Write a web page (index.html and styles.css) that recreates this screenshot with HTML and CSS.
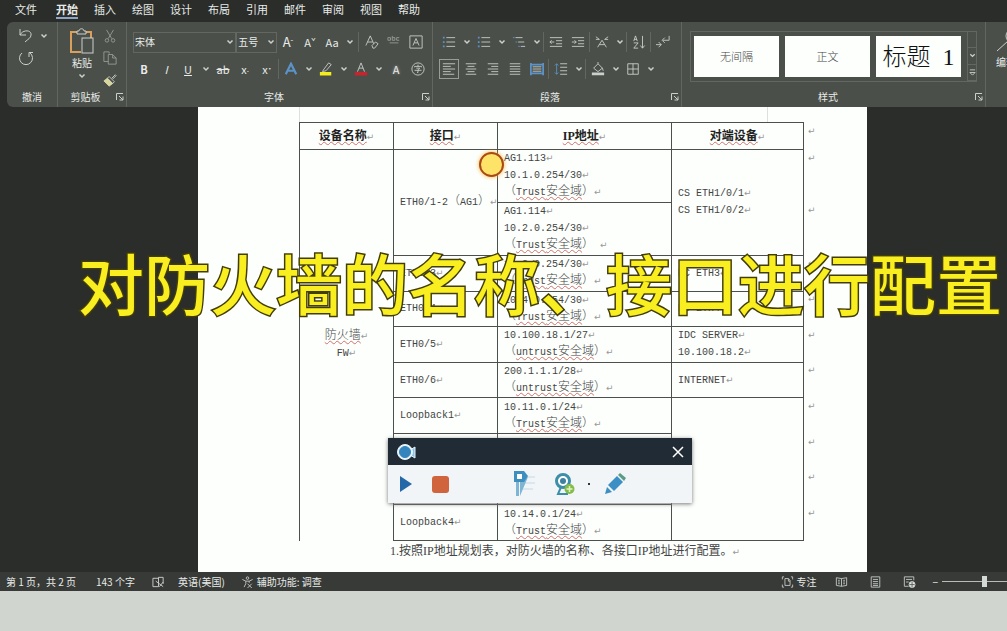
FILE: index.html
```html
<!DOCTYPE html>
<html lang="zh-CN">
<head>
<meta charset="utf-8">
<title>IP地址规划表</title>
<link rel="stylesheet" href="styles.css">
</head>
<body>
<svg class="defs" aria-hidden="true">
  <symbol id="chev" viewBox="0 0 8 8"><path d="M1.500 2.500 4 5l2.500-2.500" stroke-width="1.500"/></symbol>
  <symbol id="launch" viewBox="0 0 8 8"><path d="M.5 7V.5H7M3 3l4 4M7 3.500V7H3.500"/></symbol>
  <symbol id="list" viewBox="0 0 16 16"><path d="M5 3h10M5 8h10M5 13h10"/><path class="blue" d="M1 3h2M1 8h2M1 13h2" stroke-width="2"/></symbol>
</svg>

<nav class="menu">
  <a class="first" href="#">文件</a><a class="active" href="#">开始</a><a href="#">插入</a><a href="#">绘图</a><a href="#">设计</a><a href="#">布局</a><a href="#">引用</a><a href="#">邮件</a><a href="#">审阅</a><a href="#">视图</a><a href="#">帮助</a>
</nav>

<header class="ribbon">
  <section class="group undo">
    <div class="tools">
      <div class="row">
        <button class="ic" aria-label="撤消"><svg viewBox="0 0 16 16"><path d="M2 1v6h6M2 7c3-6 12-5 11 0 0 3-3 4-6 7"/></svg></button>
        <button class="ch" aria-label="撤消选项"><svg><use href="#chev"/></svg></button>
      </div>
      <div class="row"><button class="ic" aria-label="重复"><svg viewBox="0 0 16 16"><path d="M4 3a6.500 6.500 0 1 0 8 0M11 7V2.500h4"/></svg></button></div>
    </div>
    <div class="label"><span>撤消</span></div>
  </section>

  <section class="group clip">
    <div class="tools cliptools">
      <button class="paste">
        <svg viewBox="0 0 26 28"><path class="orange" d="M8 4H2v20h10M17 4h5v6" stroke-width="2"/><path d="M8 6V3h2c0-3 5-3 5 0h2v3z"/><rect x="13" y="10" width="11" height="15"/></svg>
        <span>粘贴</span>
        <svg class="chv"><use href="#chev"/></svg>
      </button>
      <div class="side">
        <button class="dim" aria-label="剪切"><svg viewBox="0 0 16 16"><path d="m4 1 6 10M12 1 6 11"/><circle cx="4.500" cy="13" r="2"/><circle cx="11.500" cy="13" r="2"/></svg></button>
        <button class="dim" aria-label="复制"><svg viewBox="0 0 16 16"><path d="M6 12H1V1h6v2M6 4h5l4 4v7H6zM11 4v4h4"/></svg></button>
        <button aria-label="格式刷"><svg viewBox="0 0 16 16"><path d="m10 6 4-4 1 1-4 4M7 4l6 6-2 2-6-6z"/><path class="cream" d="m5 6 6 6-4 3-6-6z"/></svg></button>
      </div>
    </div>
    <div class="label"><span>剪贴板</span><button class="launch" aria-label="剪贴板选项"><svg><use href="#launch"/></svg></button></div>
  </section>

  <section class="group font">
    <div class="tools">
      <div class="row">
        <button class="combo family" aria-label="字体">宋体<svg><use href="#chev"/></svg></button>
        <button class="combo size" aria-label="字号">五号<svg><use href="#chev"/></svg></button>
        <button class="ic big">A<sup>ˆ</sup></button>
        <button class="ic">A<sup>ˇ</sup></button>
        <button class="ic">Aa</button><button class="ch"><svg><use href="#chev"/></svg></button>
        <i class="sep wide"></i>
        <button class="ic" aria-label="清除格式"><svg viewBox="0 0 16 16"><path d="m1 12 5-11 4 9M3 8h6M8 12l4-4 3 2-4 5H9z"/></svg></button>
        <button class="ic dim" aria-label="拼音指南"><svg viewBox="0 0 16 16"><path d="M1 3h3v3H1zM6 1v5h3V3H6M14 3h-3v3h3M3 9h10"/></svg></button>
        <button class="ic" aria-label="字符边框"><svg viewBox="0 0 16 16"><path d="M1 1h14v14H1zM4.500 12 8 4l3.500 8M6 9h4"/></svg></button>
      </div>
      <div class="row">
        <button class="ic"><b>B</b></button>
        <button class="ic"><em>I</em></button>
        <button class="ic"><u>U</u></button><button class="ch"><svg><use href="#chev"/></svg></button>
        <button class="ic"><s>ab</s></button>
        <button class="ic">x<sub>.</sub></button>
        <button class="ic">x<sup>˙</sup></button>
        <i class="sep"></i>
        <button class="ic" aria-label="文本效果"><svg viewBox="0 0 16 16"><path class="blue" d="m2 14 6-12 6 12M5 10h6" stroke-width="2.500"/></svg></button><button class="ch"><svg><use href="#chev"/></svg></button>
        <button class="ic" aria-label="突出显示"><svg viewBox="0 0 16 16"><path d="m5 9 6-8 3 2-6 7-4 1z"/><path class="yellow" d="M1 13.500h13" stroke-width="4"/></svg></button><button class="ch"><svg><use href="#chev"/></svg></button>
        <button class="ic" aria-label="字体颜色"><svg viewBox="0 0 16 16"><path class="red" d="M1 13.500h14" stroke-width="4"/><path d="m4 11 4-10 4 10M5.500 7h5"/></svg></button><button class="ch"><svg><use href="#chev"/></svg></button>
        <button class="ic shade">A</button>
        <button class="ic" aria-label="带圈字符"><svg viewBox="0 0 16 16"><circle cx="8" cy="8" r="7"/><path d="M4 6V5h8v1M8 3v2M6 7h4L8 9v3H7M4 9.500h8"/></svg></button>
      </div>
    </div>
    <div class="label"><span>字体</span><button class="launch" aria-label="字体选项"><svg><use href="#launch"/></svg></button></div>
  </section>

  <section class="group para">
    <div class="tools">
      <div class="row">
        <button class="ic" aria-label="项目符号"><svg><use href="#list"/></svg></button><button class="ch"><svg><use href="#chev"/></svg></button>
        <button class="ic" aria-label="编号"><svg><use href="#list"/></svg></button><button class="ch"><svg><use href="#chev"/></svg></button>
        <button class="ic" aria-label="多级列表"><svg viewBox="0 0 16 16"><path d="M4 3h8M7 8h7M10 13h5"/><path class="blue" d="M1 3h2M4 8h2M7 13h2"/></svg></button><button class="ch"><svg><use href="#chev"/></svg></button>
        <i class="sep"></i>
        <button class="ic" aria-label="减少缩进"><svg viewBox="0 0 16 16"><path d="M1 3h14M8 6.500h7M8 10h7M1 13h14M6 8H1m2-2L1 8l2 2"/></svg></button>
        <button class="ic" aria-label="增加缩进"><svg viewBox="0 0 16 16"><path d="M1 3h14M8 6.500h7M8 10h7M1 13h14M1 8h5M4 6l2 2-2 2"/></svg></button>
        <i class="sep"></i>
        <button class="ic" aria-label="中文版式"><svg viewBox="0 0 16 16"><path d="m3 14 5-8 5 8M5 11h6M1 2l4 3M15 2l-4 3M1 5h4M11 5h4"/></svg></button><button class="ch"><svg><use href="#chev"/></svg></button>
        <i class="sep"></i>
        <button class="ic" aria-label="排序"><svg viewBox="0 0 16 16"><path d="m2 7 2-6 2 6M2.500 5h3M2 9h5l-5 6h5M12 1v14M9.500 12l2.500 3 2.500-3"/></svg></button>
        <i class="sep"></i>
        <button class="ic" aria-label="显示编辑标记"><svg viewBox="0 0 16 16"><path d="M15 1v5H8M10 3 7 6l3 3M0 11h6M3 8l3 3-3 3"/></svg></button>
      </div>
      <div class="row">
        <button class="ic on" aria-label="左对齐"><svg viewBox="0 0 16 16"><path d="M1 2h14M1 5h9M1 8h14M1 11h9M1 14h13"/></svg></button>
        <button class="ic" aria-label="居中"><svg viewBox="0 0 16 16"><path d="M2 2h12M4 5h8M2 8h12M4 11h8M2 14h12"/></svg></button>
        <button class="ic" aria-label="右对齐"><svg viewBox="0 0 16 16"><path d="M2 2h12M6 5h8M2 8h12M6 11h8M2 14h12"/></svg></button>
        <button class="ic" aria-label="两端对齐"><svg viewBox="0 0 16 16"><path d="M2 2h12M2 5h12M2 8h12M2 11h12M2 14h12"/></svg></button>
        <button class="ic" aria-label="分散对齐"><svg viewBox="0 0 16 16"><path class="blue" d="M1 1v14M15 1v14M1 3h14M1 13h14" stroke-width="2"/><path d="M3 5.500h10M3 8h10M3 10.500h10"/></svg></button>
        <i class="sep"></i>
        <button class="ic" aria-label="行距"><svg viewBox="0 0 16 16"><path d="M7 2h8M7 6h8M7 10h8M7 14h8"/><path class="blue" d="M3 2v12M1 4l2-2 2 2M1 12l2 2 2-2"/></svg></button><button class="ch"><svg><use href="#chev"/></svg></button>
        <i class="sep"></i>
        <button class="ic" aria-label="底纹"><svg viewBox="0 0 16 16"><path d="m3 7 5-5 5 5-5 4zM8 2V0M13 7l1 3"/><path d="M1 13.500h14" stroke-width="3"/></svg></button><button class="ch"><svg><use href="#chev"/></svg></button>
        <button class="ic" aria-label="边框"><svg viewBox="0 0 16 16"><path d="M2 2h12v12H2zM8 2v12M2 8h12"/></svg></button><button class="ch"><svg><use href="#chev"/></svg></button>
      </div>
    </div>
    <div class="label"><span>段落</span><button class="launch" aria-label="段落选项"><svg><use href="#launch"/></svg></button></div>
  </section>

  <section class="group styles">
    <div class="gallery">
      <button class="card">无间隔</button>
      <button class="card">正文</button>
      <button class="card heading">标题&nbsp; 1</button>
      <div class="scroll">
        <button aria-label="上一行"></button>
        <button aria-label="下一行"><svg><use href="#chev"/></svg></button>
        <button aria-label="其他样式"><svg viewBox="0 0 8 8"><path d="M1 1h6M1 4h6L4 7z"/></svg></button>
      </div>
    </div>
    <div class="label"><span>样式</span><button class="launch" aria-label="样式选项"><svg><use href="#launch"/></svg></button></div>
  </section>

  <section class="group edit">
    <button class="find"><svg viewBox="0 0 28 28"><circle cx="17" cy="9" r="7"/><path d="M12 14 1 24"/></svg><span>编辑</span></button>
  </section>
</header>

<main class="work">
  <article class="page">
    <div class="crop"></div>
    <table>
      <colgroup><col class="c1"><col class="c2"><col class="c3"><col class="c4"><col class="c5"></colgroup>
      <tr class="head"><th><u>设备名称</u><i>↵</i></th><th><u>接口</u><i>↵</i></th><th><u>IP地址</u><i>↵</i></th><th><u>对端设备</u><i>↵</i></th><td class="end"><i>↵</i></td></tr>
      <tr><td class="dev" rowspan="10"><u class="zh">防火墙</u><i>↵</i><br>FW<i>↵</i></td><td rowspan="2">ETH0/1-2<span class="zh">（</span>AG1<span class="zh">）</span><i>↵</i></td><td>AG1.113<i>↵</i><br>10.1.0.254/30<i>↵</i><br><span class="zh">（</span><u>Trust<span class="zh">安全域</span></u><span class="zh">）</span><i>↵</i></td><td rowspan="2">CS ETH1/0/1<i>↵</i><br>CS ETH1/0/2<i>↵</i></td><td class="end"><i>↵</i></td></tr>
      <tr><td>AG1.114<i>↵</i><br>10.2.0.254/30<i>↵</i><br><span class="zh">（</span><u>Trust<span class="zh">安全域</span></u><span class="zh">）</span> <i>↵</i></td><td class="end"><i>↵</i></td></tr>
      <tr><td>ETH0/3<i>↵</i></td><td>10.3.0.254/30<i>↵</i><br><span class="zh">（</span><u>Trust<span class="zh">安全域</span></u><span class="zh">）</span><i>↵</i></td><td>BC ETH3<i>↵</i></td><td class="end"><i>↵</i></td></tr>
      <tr><td>ETH0/4<i>↵</i></td><td>10.4.0.254/30<i>↵</i><br><span class="zh">（</span><u>Trust<span class="zh">安全域</span></u><span class="zh">）</span><i>↵</i></td><td>BC ETH4<i>↵</i></td><td class="end"><i>↵</i></td></tr>
      <tr><td>ETH0/5<i>↵</i></td><td>10.100.18.1/27<i>↵</i><br><span class="zh">（</span><u>untrust<span class="zh">安全域</span></u><span class="zh">）</span><i>↵</i></td><td>IDC SERVER<i>↵</i><br>10.100.18.2<i>↵</i></td><td class="end"><i>↵</i></td></tr>
      <tr><td>ETH0/6<i>↵</i></td><td>200.1.1.1/28<i>↵</i><br><span class="zh">（</span><u>untrust<span class="zh">安全域</span></u><span class="zh">）</span><i>↵</i></td><td>INTERNET<i>↵</i></td><td class="end"><i>↵</i></td></tr>
      <tr><td>Loopback1<i>↵</i></td><td>10.11.0.1/24<i>↵</i><br><span class="zh">（</span><u>Trust<span class="zh">安全域</span></u><span class="zh">）</span><i>↵</i></td><td rowspan="4"></td><td class="end"><i>↵</i></td></tr>
      <tr><td></td><td><br><br></td><td class="end"><i>↵</i></td></tr>
      <tr><td></td><td><br><br></td><td class="end"><i>↵</i></td></tr>
      <tr><td>Loopback4<i>↵</i></td><td>10.14.0.1/24<i>↵</i><br><span class="zh">（</span><u>Trust<span class="zh">安全域</span></u><span class="zh">）</span><i>↵</i></td><td class="end"><i>↵</i></td></tr>
    </table>
    <p class="note"><span class="num">1.</span>按照<span class="num">IP</span>地址规划表，对防火墙的名称、各接口<span class="num">IP</span>地址进行配置。<i>↵</i></p>
  </article>
</main>

<footer class="status">
  <span class="pages">第 1 页，共 2 页</span>
  <span class="words">143 个字</span>
  <svg class="proof" viewBox="0 0 14 12"><path d="M7 2H1v9h6V1h5v7M4 5l8 6M8 11l4-5"/></svg>
  <span class="lang">英语(美国)</span>
  <svg class="access" viewBox="0 0 14 14"><circle cx="7" cy="2.500" r="1.500"/><path d="M1 4l4 2v3l-2 4M13 4 9 6v2M5 6h4M7 9l5 5M12 9l-5 5"/></svg>
  <span>辅助功能: 调查</span>
  <span class="spacer"></span>
  <svg class="focus" viewBox="0 0 14 14"><path d="M3 1H1v3M11 1h2v3M1 10v3h2M13 10v3h-2M4 3h4l2 2v6H4zM8 3v3h2"/></svg>
  <span class="focustext">专注</span>
  <svg class="view" viewBox="0 0 14 14"><path d="M7 3 1 2v9l6 1 6-1V2zM7 3v9M3 5h2M3 7h2M3 9h2M9 5h2M9 7h2M9 9h2"/></svg>
  <svg class="view" viewBox="0 0 14 14"><path d="M2 1h10v12H2zM4 4h6M4 6.500h6M4 9h6M4 11h6"/></svg>
  <svg class="view last" viewBox="0 0 14 14"><path d="M6 12H1V1h11v4M3 4h7M3 7h3"/><circle class="fill" cx="10" cy="10" r="3.500"/><path class="dark" d="M10 7v6M7 10h6"/></svg>
  <span class="minus">−</span>
  <input class="zoom" type="range" min="0" max="100" value="50" aria-label="显示比例">
</footer>
<div class="desk"></div>

<div class="pointer"></div>
<p class="caption">对防火墙的名称、接口进行配置</p>

<aside class="recorder">
  <div class="bar">
    <svg class="cam" viewBox="0 0 20 18"><path class="camtail" d="m14 7 5-3v11l-5-3z"/><circle class="camring" cx="9" cy="9" r="7.500"/><circle class="camlens" cx="9" cy="9" r="5.500"/></svg>
    <button class="close" aria-label="关闭"><svg viewBox="0 0 12 12"><path d="m1 1 10 10M11 1 1 11" stroke-width="1.500"/></svg></button>
  </div>
  <div class="controls">
    <button class="play" aria-label="播放"><svg viewBox="0 0 14 16"><path d="M1 0v16L13 8z"/></svg></button>
    <button class="stop" aria-label="停止"></button>
    <button class="mark" aria-label="标记"><svg viewBox="0 0 24 28"><path fill="#dbe6ee" d="M10 6h13v2H10zM10 12h13v2H10zM10 18h11v2H10z"/><path fill="#7fb5d4" d="M4 11v15h3V11zM8 12v14l8-19z"/><path fill="#3d8fc0" d="M2 1h10l4 5-4 6H2z"/><rect x="5" y="4" width="5" height="5" fill="#fff"/></svg></button>
    <button class="web" aria-label="添加摄像头"><svg viewBox="0 0 22 24"><path d="m7 15-3 7h10" fill="none" stroke="#3d8fa8" stroke-width="2"/><circle cx="9" cy="9" r="6.500" fill="#fff" stroke="#3d8fa8" stroke-width="3"/><circle cx="9" cy="9" r="3" fill="#3d80a0"/><circle cx="15.500" cy="17" r="5" fill="#84bc4c"/><path d="M12.500 17h6M15.500 14v6" stroke="#e4f3bd" stroke-width="1.500"/></svg></button>
    <span class="dot"></span>
    <button class="pen" aria-label="画笔"><svg viewBox="0 0 22 22"><path fill="#3b8fc4" d="m4 12 9-9 6 6-9 9z"/><path fill="#5c9c86" d="m14 2 2-2 6 5-2 3z"/><path fill="#3b8fc4" d="m3 14 5 5-7 2z"/></svg></button>
  </div>
</aside>
</body>
</html>
```
FILE: styles.css
```css
* { box-sizing: border-box; }

body {
  margin: 0;
  height: 100vh;
  display: flex;
  flex-direction: column;
  overflow: hidden;
  position: relative;
  background: #2a2d2a;
  color: #e8ebe8;
  font: 11px/16px "Noto Sans CJK SC", sans-serif;
}

button {
  border: 0;
  padding: 0;
  background: none;
  color: inherit;
  font: inherit;
  display: flex;
  align-items: center;
  justify-content: center;
}

svg { fill: none; stroke: #ccd0cc; flex: none; }
.defs { position: absolute; width: 0; height: 0; }
.blue { stroke: #5b93c9; }
.orange { stroke: #d9a05b; }
.yellow { stroke: #f4ee1c; }
.red { stroke: #c8242c; }
.cream { fill: #d8d6a0; stroke: #d8d6a0; }
.dim { opacity: .6; }

/* menu */
.menu { height: 22px; flex: none; display: flex; gap: 16px; padding: 1px 15px 0; }
.menu a { color: inherit; text-decoration: none; height: 18px; white-space: nowrap; }
.menu .first { margin-right: 3px; }
.menu .active { font-weight: 700; border-bottom: 2px solid #8ea5c8; }

/* ribbon */
.ribbon {
  height: 85px;
  flex: none;
  display: flex;
  margin-left: 7px;
  overflow: hidden;
  background: #4a4f4a;
  border-radius: 6px 0 0 6px;
}
.group {
  flex: none;
  display: flex;
  flex-direction: column;
  justify-content: space-between;
  padding: 9px 5px 2px;
  border-right: 1px solid #626762;
}
.group.undo { width: 51px; padding-top: 3px; }
.group.clip { width: 69px; }
.group.font { width: 306px; padding-left: 6px; }
.group.para { width: 249px; }
.group.styles { width: 304px; padding-left: 8px; }
.group.edit { width: 60px; border: 0; }
.tools { display: flex; flex-direction: column; gap: 5px; }
.undo .tools { gap: 0; }
.row { display: flex; align-items: center; height: 22px; }
.ic { width: 22px; height: 22px; flex: none; }
.ic svg { width: 14px; height: 14px; }
.undo .ic { margin-left: 3px; }
.undo .ic svg { width: 16px; height: 16px; }
.big { font-size: 13px; }
.ch { width: 13px; height: 22px; flex: none; }
.ch svg { width: 8px; height: 8px; }
.sep { width: 1px; height: 20px; margin-right: 1px; background: #626762; flex: none; }
.sep.wide { margin: 0 2px; }
sup, sub { font-size: 8px; line-height: 0; }
.shade { text-shadow: 0 0 3px #aaa; }
.on svg { width: 20px; height: 20px; padding: 2px; border: 1px solid #989d98; }
.combo { height: 21px; justify-content: space-between; padding: 0 1px; border: 1px solid #626762; font-size: 10px; }
.combo svg { width: 8px; height: 8px; }
.family { width: 104px; }
.size { width: 41px; }

.label { position: relative; display: flex; justify-content: center; font-size: 10px; line-height: 16px; }
.launch { position: absolute; right: -3px; top: 4px; }
.launch svg { width: 8px; height: 8px; }
.font .label { padding-right: 12px; }
.para .label, .styles .label { padding-right: 14px; }
.clip .label { padding-right: 13px; }

.cliptools { flex-direction: row; justify-content: space-between; padding: 0 4px 0 2px; margin-top: -3px; }
.paste { flex-direction: column; justify-content: flex-start; font-size: 10px; line-height: 14px; padding-left: 4px; }
.paste svg { width: 26px; height: 28px; }
.paste .chv { width: 8px; height: 12px; }
.side { display: flex; flex-direction: column; gap: 8px; padding-top: 1px; }
.side svg { width: 14px; height: 14px; }

.gallery { display: flex; gap: 6px; height: 51px; width: 287px; padding: 4px 0 4px 3px; border: 1px solid #626762; }
.card { width: 85px; background: #fcfffc; color: #444; font-family: "Liberation Serif", "Noto Sans CJK SC", serif; font-weight: 300; }
.heading { color: #111; font-size: 24px; }
.scroll { display: flex; flex-direction: column; flex: 1; margin: -4px 0; border-left: 1px solid #626762; }
.scroll button { flex: 1; border-bottom: 1px solid #626762; }
.scroll svg { width: 7px; height: 7px; }
.find { align-self: flex-start; flex-direction: column; align-items: flex-start; padding-left: 5px; font-size: 10px; line-height: 14px; margin-top: -4px; }
.find svg { width: 28px; height: 28px; }

/* document */
.work { flex: 1; min-height: 0; padding: 0 140px 0 198px; overflow: hidden; }
.page {
  height: 100%;
  padding: 0 0 0 101px;
  background: #fcfffc;
  color: #444;
  font: 10px/17px "Liberation Mono", monospace;
}
.crop { height: 15px; width: 469px; border: solid #dde0dd; border-width: 0 1px; }
.page table { border-collapse: collapse; table-layout: fixed; width: 521px; height: 419px; }
.c1 { width: 94px; }
.c2 { width: 104px; }
.c3 { width: 174px; }
.c4 { width: 132px; }
.c5 { width: 17px; }
.page th, .page td { border: 1px solid #4c504c; padding: 0 6px; vertical-align: middle; text-align: left; white-space: nowrap; }
.page .head { height: 27px; }
.page th { color: #222; text-align: center; font: 700 12px/17px "Liberation Serif", "Noto Sans CJK SC", serif; }
.page .dev { text-align: center; border-bottom-color: transparent; }
.page .end { border: 0; padding: 0 0 0 4px; vertical-align: top; }
.page u { text-decoration: underline wavy #d2716e 1px; text-underline-offset: 1px; }
.page i { color: #999; font: 9px/9px "DejaVu Sans", sans-serif; }
.zh { font: 300 12px/12px "Noto Sans CJK SC", sans-serif; }
.note { margin: 0 0 0 91px; font: 12px/17px "Noto Sans CJK SC", sans-serif; white-space: nowrap; }
.num { font-family: "Liberation Serif", serif; }

/* status bar */
.status { height: 19px; flex: none; display: flex; align-items: center; padding-left: 6px; background: #373a37; font-size: 10px; white-space: nowrap; }
.pages { width: 90px; }
.words { width: 56px; }
.status svg { width: 13px; height: 12px; }
.lang { margin: 0 16px 0 13px; }
.access { margin-right: 3px; }
.spacer { flex: 1; }
.focustext { margin: 0 19px 0 2px; }
.status .view { margin-right: 21px; }
.status .last { margin-right: 16px; }
.fill { fill: #e0e4e0; }
.dark { stroke: #555; }
.minus { margin-right: 4px; }
.zoom { appearance: none; width: 85px; height: 12px; margin: 0 -20px 0 0; background: linear-gradient(#b9bdb9, #b9bdb9) center / 100% 1px no-repeat; }
.zoom::-webkit-slider-thumb { appearance: none; width: 5px; height: 11px; background: #d5d9d5; }
.desk { height: 40px; flex: none; background: #d1d5cf; }

/* screen overlays */
.pointer { position: absolute; left: 479px; top: 152px; width: 25px; height: 25px; border: 2px solid #a94a16; border-radius: 50%; background: #fde468; box-shadow: 0 0 4px #ffb43c; }
.caption {
  position: absolute;
  left: 78px;
  top: 241px;
  margin: 0;
  color: #f8ee20;
  font: 500 66px/80px "Noto Sans CJK SC", sans-serif;
  white-space: nowrap;
  -webkit-text-stroke: 3px #423c08;
  paint-order: stroke fill;
}
.recorder { position: absolute; left: 388px; top: 438px; width: 304px; background: #f2f5f8; box-shadow: 0 1px 4px #777; }
.bar { height: 27px; display: flex; align-items: center; justify-content: space-between; padding: 0 8px; background: #202b35; }
.cam { width: 20px; height: 18px; }
.camtail { fill: #8cc4e8; stroke: #e5f2fb; }
.camring { fill: #e8f4fc; stroke: #e8f4fc; }
.camlens { fill: #3484bd; stroke: #3484bd; }
.close svg { width: 12px; height: 12px; stroke: #fff; }
.controls { height: 38px; display: flex; align-items: center; padding-left: 11px; }
.controls svg { stroke: none; }
.play svg { width: 14px; height: 16px; fill: #2468a8; }
.stop { width: 17px; height: 17px; margin: 0 63px 0 19px; border-radius: 3px; background: #d0643c; }
.mark svg { width: 24px; height: 28px; }
.web { margin-left: 18px; }
.web svg { width: 22px; height: 24px; }
.dot { width: 2px; height: 2px; margin: 0 14px 0 12px; background: #333; }
.pen svg { width: 22px; height: 22px; }
```
